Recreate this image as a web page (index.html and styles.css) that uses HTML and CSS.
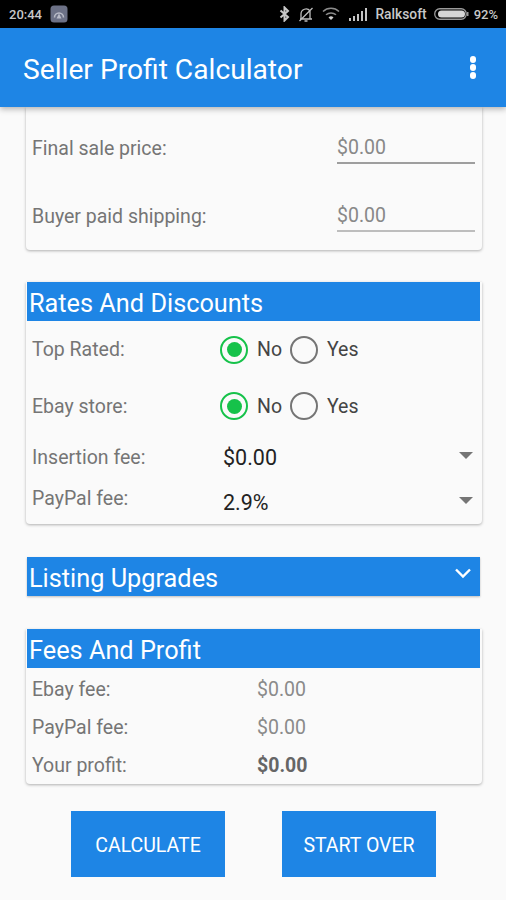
FILE: index.html
```html
<!DOCTYPE html>
<html lang="en">
<head>
    <meta charset="UTF-8">
    <meta name="viewport" content="width=device-width, initial-scale=1.0">
    <title>Seller Profit Calculator</title>
    <link rel="stylesheet" href="styles.css">
</head>
<body>
    <!-- Status Bar -->
    <div class="status-bar">
        <span class="clock">20:44</span>
        <svg class="notif-icon" width="18" height="18" viewBox="0 0 18 18">
            <rect x="0.5" y="0.5" width="17" height="17" rx="3.5" fill="#6c7186"/>
            <path d="M4.5 12.5a4.5 4.5 0 1 1 9 0" fill="none" stroke="#b9bcc8" stroke-width="1.6"/>
            <path d="M9 8.5l-2.5 5h5z" fill="#b9bcc8"/>
        </svg>
        <span class="status-right">
            <svg width="11" height="16" viewBox="0 0 11 16">
                <path d="M1.5 4.5l7.5 6.5-3.5 3.5v-13L9 5 1.5 11.5" fill="none" stroke="#c8c8c8" stroke-width="2"/>
            </svg>
            <svg class="gap-bell" width="16" height="17" viewBox="0 0 16 17">
                <path d="M3 13V8a5 5 0 0 1 9-3v8zM2 13h12M6.500 15h3M1.500 15L14.500 2" fill="none" stroke="#bdbdbd" stroke-width="1.300"/>
            </svg>
            <svg class="gap-wifi" width="18" height="14" viewBox="0 0 18 14">
                <path d="M1 4.500a11.500 11.500 0 0 1 16 0M4 7.800a7.500 7.500 0 0 1 10 0" fill="none" stroke="#8c8c8c" stroke-width="1.500"/>
                <path d="M6.500 10.500a3.500 3.500 0 0 1 5 0L9 13z" fill="#d0d0d0"/>
            </svg>
            <svg class="gap-signal" width="18" height="13" viewBox="0 0 18 13">
                <path d="M0 10h2v3H0zM4 8h2v5H4zM8 6h2v7H8zM12 3h2v10h-2zM16 0h2v13h-2z" fill="#c4c4c4"/>
            </svg>
            <span class="carrier">Ralksoft</span>
            <svg class="gap-battery" width="35" height="14" viewBox="0 0 35 14">
                <rect x="0.750" y="1.750" width="31.500" height="10.500" rx="5" fill="none" stroke="#9a9a9a" stroke-width="1.300"/>
                <rect x="4" y="3.500" width="27" height="7" rx="3.500" fill="#d6d6d6"/>
                <rect x="33" y="5" width="1.500" height="4" fill="#9a9a9a"/>
            </svg>
            <span class="battery-level">92%</span>
        </span>
    </div>

    <!-- App Bar -->
    <header class="app-bar">
        <h1>Seller Profit Calculator</h1>
        <div class="more-menu">
            <span></span><span></span><span></span>
        </div>
    </header>

    <main class="content">
        <!-- Sale Details -->
        <section class="card card-sale">
            <div class="input-row">
                <label>Final sale price:</label>
                <div class="amount-input dark-line">$0.00</div>
            </div>
            <div class="input-row">
                <label>Buyer paid shipping:</label>
                <div class="amount-input">$0.00</div>
            </div>
        </section>

        <!-- Rates And Discounts -->
        <section class="card card-rates">
            <h2 class="section-title">Rates And Discounts</h2>
            <div class="radio-row">
                <label>Top Rated:</label>
                <span class="radio checked"></span><span class="radio-text no-text">No</span>
                <span class="radio"></span><span class="radio-text">Yes</span>
            </div>
            <div class="radio-row">
                <label>Ebay store:</label>
                <span class="radio checked"></span><span class="radio-text no-text">No</span>
                <span class="radio"></span><span class="radio-text">Yes</span>
            </div>
            <div class="select-row insertion">
                <label>Insertion fee:</label>
                <span class="select-value">$0.00</span>
                <span class="select-arrow"></span>
            </div>
            <div class="select-row paypal">
                <label>PayPal fee:</label>
                <span class="select-value">2.9%</span>
                <span class="select-arrow"></span>
            </div>
        </section>

        <!-- Listing Upgrades -->
        <section class="section-title upgrades">
            <span>Listing Upgrades</span>
            <svg width="18" height="12" viewBox="0 0 18 12">
                <path d="M2 2.500l7 7 7-7" fill="none" stroke="#fff" stroke-width="2.400"/>
            </svg>
        </section>

        <!-- Fees And Profit -->
        <section class="card card-fees">
            <h2 class="section-title">Fees And Profit</h2>
            <div class="fee-row"><label>Ebay fee:</label><span>$0.00</span></div>
            <div class="fee-row"><label>PayPal fee:</label><span>$0.00</span></div>
            <div class="fee-row"><label>Your profit:</label><strong>$0.00</strong></div>
        </section>

        <div class="buttons">
            <button type="button">CALCULATE</button>
            <button type="button">START OVER</button>
        </div>
    </main>
</body>
</html>
```

FILE: styles.css
```css
/* Global Reset */
* {
    margin: 0;
    padding: 0;
    box-sizing: border-box;
}

body {
    font-family: 'Roboto', sans-serif;
    width: 506px;
    height: 900px;
    overflow: hidden;
    background: #fafafa;
    color: #757575;
}

/* Status Bar */
.status-bar {
    display: flex;
    align-items: center;
    height: 28px;
    padding: 0 8px 0 9px;
    background: #000;
    color: #c8c8c8;
    font-size: 13px;
    font-weight: 500;
}

.notif-icon {
    margin-left: 8px;
}

.status-right {
    display: flex;
    align-items: center;
    margin-left: auto;
}

.gap-bell {
    margin-left: 8px;
}

.gap-wifi {
    margin-left: 8px;
}

.gap-signal {
    margin-left: 9px;
}

.carrier {
    margin-left: 8px;
    font-size: 13.800px;
}

.gap-battery {
    margin-left: 7px;
}

.battery-level {
    margin-left: 5px;
    font-size: 13px;
}

/* App Bar */
.app-bar {
    position: relative;
    z-index: 2;
    display: flex;
    align-items: center;
    justify-content: space-between;
    height: 79px;
    padding: 0 30px 0 23px;
    background: #1e85e5;
    box-shadow: 0 2px 6px rgba(0, 0, 0, 0.3);
    color: #fff;
}

.app-bar h1 {
    padding-top: 3px;
    font-size: 28.200px;
    font-weight: 400;
}

.more-menu {
    display: flex;
    flex-direction: column;
    gap: 1.500px;
}

.more-menu span {
    width: 6.500px;
    height: 6.500px;
    border-radius: 50%;
    background: #fff;
}

/* Cards */
.content {
    padding: 0 24px 0 26px;
}

.card {
    background: #fafafa;
    border-radius: 0 0 4px 4px;
    box-shadow: 0 1px 3px rgba(0, 0, 0, 0.3);
}

.card-sale {
    height: 143px;
    padding: 23px 7px 0 6px;
}

.card-rates {
    height: 242px;
    margin-top: 32px;
}

.card-fees {
    height: 155px;
    margin-top: 33px;
}

label {
    font-size: 19.500px;
    color: #757575;
}

.section-title {
    height: 39px;
    margin: 0 2px 0 1px;
    padding-left: 2px;
    background: #1e85e5;
    color: #fff;
    font-size: 25.300px;
    font-weight: 400;
    line-height: 43px;
}

/* Sale Inputs */
.input-row {
    display: flex;
    align-items: center;
    justify-content: space-between;
    height: 34px;
    margin-bottom: 34px;
}

.input-row label {
    padding-top: 2px;
}

.amount-input {
    width: 138px;
    height: 34px;
    border-bottom: 2px solid #bdbdbd;
    color: #888;
    font-size: 19.500px;
    line-height: 36px;
}

.amount-input.dark-line {
    border-bottom-color: #9e9e9e;
}

/* Radio Rows */
.radio-row {
    display: flex;
    align-items: center;
    height: 56px;
    padding-left: 6px;
    font-size: 19.500px;
}

.card-rates .radio-row:first-of-type {
    height: 57px;
}

.radio-row label {
    width: 188px;
}

.radio {
    display: flex;
    align-items: center;
    justify-content: center;
    width: 28px;
    height: 28px;
    border: 2px solid #757575;
    border-radius: 50%;
}

.radio.checked {
    border: 2.500px solid #16c24a;
}

.radio.checked::after {
    content: "";
    width: 15px;
    height: 15px;
    border-radius: 50%;
    background: #16c24a;
}

.radio-text {
    margin-left: 9px;
    color: #444;
}

.no-text {
    width: 33px;
}

/* Select Rows */
.select-row {
    display: flex;
    align-items: center;
    padding: 0 9px 0 6px;
}

.select-row.insertion {
    height: 46px;
}

.select-row.paypal {
    height: 40px;
}

.select-row label {
    width: 191px;
}

.select-value {
    flex: 1;
    color: #222;
    font-size: 21.500px;
}

.select-row.insertion .select-arrow {
    margin-top: -4px;
}

.select-row.paypal .select-value {
    margin-top: 4px;
}

.select-row.paypal label {
    margin-top: -4px;
}

.select-arrow {
    width: 0;
    height: 0;
    border-left: 7px solid transparent;
    border-right: 7px solid transparent;
    border-top: 7px solid #757575;
}

/* Listing Upgrades */
.upgrades {
    display: flex;
    justify-content: space-between;
    margin-top: 33px;
    padding-right: 8px;
    box-shadow: 0 1px 2px rgba(0, 0, 0, 0.25);
}

.upgrades svg {
    margin-top: 10px;
}

/* Fees */
.fee-row {
    display: flex;
    align-items: center;
    height: 38px;
    padding-left: 6px;
    font-size: 19.500px;
    color: #8a8a8a;
}

.fee-row:first-of-type {
    margin-top: 2px;
}

.fee-row label {
    width: 225px;
}

.fee-row strong {
    color: #666;
    font-weight: 700;
}

/* Action Buttons */
.buttons {
    display: flex;
    justify-content: center;
    gap: 57px;
    margin-top: 27px;
    margin-left: -1px;
}

.buttons button {
    width: 154px;
    height: 66px;
    padding-top: 2px;
    border: 0;
    background: #1e85e5;
    color: #fff;
    font-family: inherit;
    font-size: 19.500px;
    font-weight: 400;
}
```
